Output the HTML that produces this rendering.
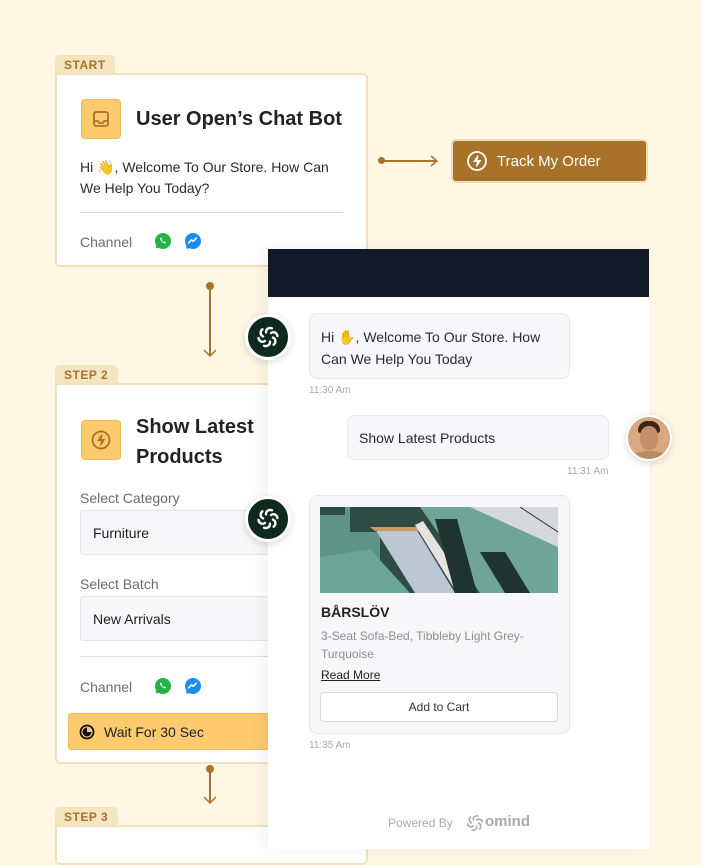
<!DOCTYPE html>
<html><head><meta charset="utf-8"><style>
*{box-sizing:border-box;margin:0;padding:0}
body{width:701px;height:845px;background:#fef7e4;font-family:"Liberation Sans","Noto Sans CJK SC",sans-serif;position:relative;overflow:hidden;color:#1f1f24}
.abs{position:absolute}
.tag{position:absolute;background:#f3e4c2;color:#a8732a;font-size:12px;font-weight:bold;letter-spacing:.5px;padding:3px 0 0 9px;height:19px;border-radius:5px 5px 0 0;white-space:nowrap}
.card{position:absolute;background:#fff;border:2px solid #f1e1bd;border-radius:0 5px 5px 5px}
.ico{position:absolute;width:40px;height:40px;background:#fdca6e;border:1px solid #f3b957;border-radius:4px;display:flex;align-items:center;justify-content:center}
.gray{color:#6b6b70;font-size:14px}
.field{position:absolute;background:#f7f7f9;border:1px solid #e6e6ea;border-radius:3px;font-size:14px;padding-left:12px;display:flex;align-items:center}
.bubble{position:absolute;background:#f7f6f9;border:1px solid #e8e7ec;border-radius:8px;font-size:14px;color:#2a2a30}
.time{position:absolute;font-size:10px;color:#a9a9ae}
.bot{position:absolute;width:46px;height:46px;border-radius:50%;background:#0f2a1c;border:3px solid #fff;box-shadow:0 2px 8px rgba(0,0,0,.15);display:flex;align-items:center;justify-content:center}
</style></head><body>

<!-- START card -->
<div class="tag" style="left:55px;top:55px;width:60px">START</div>
<div class="card" style="left:55px;top:73px;width:313px;height:194px">
  <div class="ico" style="left:24px;top:24px"><svg width="20" height="20" viewBox="0 0 20 20" fill="none" stroke="#a8732a" stroke-width="1.8"><rect x="3" y="3" width="14" height="14" rx="2"/><path d="M3 12h4l1 2h4l1-2h4"/></svg></div>
  <div class="abs" style="left:79px;top:33px;font-size:20px;font-weight:bold;color:#222">User Open’s Chat Bot</div>
  <div class="abs" style="left:23px;top:82px;font-size:14px;line-height:21px;color:#2a2a30">Hi 👋, Welcome To Our Store. How Can<br>We Help You Today?</div>
  <div class="abs" style="left:23px;top:137px;width:263px;height:1px;background:#dcdcdc"></div>
  <div class="abs gray" style="left:23px;top:159px">Channel</div>
  <svg class="abs" style="left:97px;top:157px" width="18" height="18" viewBox="0 0 18 18"><circle cx="9" cy="9" r="8" fill="#25b244"/><path d="M3 16l1-3.5" stroke="#25b244" stroke-width="3"/><path d="M6.5 5.5c-.6.6-.6 1.8.5 3.3 1.2 1.6 2.7 2.6 3.7 2.6.7 0 1.3-.6 1.3-1l-1.5-1-1 .6c-.7-.3-1.6-1.2-1.9-1.9l.6-1-1-1.5c-.3 0-.5 0-.7.2z" fill="#fff"/></svg>
  <svg class="abs" style="left:127px;top:157px" width="18" height="18" viewBox="0 0 18 18"><circle cx="9" cy="9" r="8" fill="#1a8cf5"/><path d="M3.5 16.5l.5-3" stroke="#1a8cf5" stroke-width="3"/><path d="M4.5 11l3-3.2 1.8 1.5 3-3.2-3 3.2-1.8-1.5z" fill="none" stroke="#fff" stroke-width="1.5" stroke-linejoin="round"/></svg>
</div>

<!-- connector right -->
<div class="abs" style="left:378px;top:157px;width:7px;height:7px;border-radius:50%;background:#a8732a"></div>
<div class="abs" style="left:384px;top:160px;width:52px;height:1.5px;background:#a8732a"></div>
<svg class="abs" style="left:428px;top:155px" width="11" height="12" viewBox="0 0 11 12"><path d="M3 1l6 5-6 5" fill="none" stroke="#a8732a" stroke-width="1.5"/></svg>
<div class="abs" style="left:451px;top:139px;width:197px;height:44px;border:2px solid #f0dcb2;border-radius:5px;background:#a87328;color:#fff;font-size:15px;display:flex;align-items:center;padding-left:44px">Track My Order</div>
<svg class="abs" style="left:466px;top:150px" width="22" height="22" viewBox="0 0 22 22" fill="none" stroke="#fff" stroke-width="1.8"><circle cx="11" cy="11" r="9"/><path d="M12 5.5l-4 6h3.5l-1 5 4-6H11z" fill="#fff" stroke-width="1"/></svg>

<!-- vertical connector 1 -->
<div class="abs" style="left:206px;top:282px;width:8px;height:8px;border-radius:50%;background:#a8732a"></div>
<div class="abs" style="left:209px;top:288px;width:1.5px;height:68px;background:#a8732a"></div>
<svg class="abs" style="left:203px;top:348px" width="14" height="10" viewBox="0 0 14 10"><path d="M1 2l6 6 6-6" fill="none" stroke="#a8732a" stroke-width="1.5"/></svg>

<!-- STEP 2 -->
<div class="tag" style="left:55px;top:365px;width:63px">STEP 2</div>
<div class="card" style="left:55px;top:383px;width:313px;height:381px">
  <div class="ico" style="left:24px;top:35px"><svg width="22" height="22" viewBox="0 0 22 22" fill="none" stroke="#a8732a" stroke-width="1.8"><circle cx="11" cy="11" r="8.5"/><path d="M12 5.5l-4 6h3.5l-1 5 4-6H11z" fill="#a8732a" stroke-width="1"/></svg></div>
  <div class="abs" style="left:79px;top:27px;font-size:20px;font-weight:bold;line-height:30px;color:#222">Show Latest<br>Products</div>
  <div class="abs gray" style="left:23px;top:105px">Select Category</div>
  <div class="field" style="left:23px;top:125px;width:260px;height:45px">Furniture</div>
  <div class="abs gray" style="left:23px;top:191px">Select Batch</div>
  <div class="field" style="left:23px;top:211px;width:260px;height:45px">New Arrivals</div>
  <div class="abs" style="left:23px;top:271px;width:263px;height:1px;background:#dcdcdc"></div>
  <div class="abs gray" style="left:23px;top:294px">Channel</div>
  <svg class="abs" style="left:97px;top:292px" width="18" height="18" viewBox="0 0 18 18"><circle cx="9" cy="9" r="8" fill="#25b244"/><path d="M3 16l1-3.5" stroke="#25b244" stroke-width="3"/><path d="M6.5 5.5c-.6.6-.6 1.8.5 3.3 1.2 1.6 2.7 2.6 3.7 2.6.7 0 1.3-.6 1.3-1l-1.5-1-1 .6c-.7-.3-1.6-1.2-1.9-1.9l.6-1-1-1.5c-.3 0-.5 0-.7.2z" fill="#fff"/></svg>
  <svg class="abs" style="left:127px;top:292px" width="18" height="18" viewBox="0 0 18 18"><circle cx="9" cy="9" r="8" fill="#1a8cf5"/><path d="M3.5 16.5l.5-3" stroke="#1a8cf5" stroke-width="3"/><path d="M4.5 11l3-3.2 1.8 1.5 3-3.2-3 3.2-1.8-1.5z" fill="none" stroke="#fff" stroke-width="1.5" stroke-linejoin="round"/></svg>
  <div class="abs" style="left:11px;top:328px;width:260px;height:37px;background:#fdca6e;border:1px solid #f0b95a;border-radius:3px;font-size:14px;display:flex;align-items:center;padding-left:35px">Wait For 30 Sec</div>
  <svg class="abs" style="left:22px;top:339px" width="16" height="16" viewBox="0 0 16 16"><circle cx="8" cy="8" r="6.5" fill="none" stroke="#111" stroke-width="1.8"/><path d="M8 3.5a4.5 4.5 0 1 0 4.5 4.5H8z" fill="#111"/></svg>
</div>

<!-- vertical connector 2 -->
<div class="abs" style="left:206px;top:765px;width:8px;height:8px;border-radius:50%;background:#a8732a"></div>
<div class="abs" style="left:209px;top:771px;width:1.5px;height:32px;background:#a8732a"></div>
<svg class="abs" style="left:203px;top:795px" width="14" height="10" viewBox="0 0 14 10"><path d="M1 2l6 6 6-6" fill="none" stroke="#a8732a" stroke-width="1.5"/></svg>

<div class="tag" style="left:55px;top:807px;width:63px">STEP 3</div>
<div class="card" style="left:55px;top:825px;width:313px;height:40px"></div>

<!-- chat panel -->
<div class="abs" style="left:268px;top:249px;width:381px;height:600px;background:#fff;box-shadow:-6px 0 14px rgba(0,0,0,.05)">
  <div style="height:48px;background:#111827"></div>
</div>

<div class="bot" style="left:245px;top:314px"><svg width="28" height="28" viewBox="-14 -14 28 28" fill="none" stroke="#fff" stroke-width="2.4" stroke-linecap="round"><path d="M3-4C6-6 9-4 9.5-1"/><path d="M3-4C6-6 9-4 9.5-1" transform="rotate(60)"/><path d="M3-4C6-6 9-4 9.5-1" transform="rotate(120)"/><path d="M3-4C6-6 9-4 9.5-1" transform="rotate(180)"/><path d="M3-4C6-6 9-4 9.5-1" transform="rotate(240)"/><path d="M3-4C6-6 9-4 9.5-1" transform="rotate(300)"/></svg></div>
<div class="bubble" style="left:309px;top:313px;width:261px;height:66px;padding:12px 11px;line-height:22px">Hi ✋, Welcome To Our Store. How Can We Help You Today</div>
<div class="time" style="left:309px;top:385px">11:30 Am</div>

<div class="bubble" style="left:347px;top:415px;width:262px;height:45px;padding:14px 11px">Show Latest Products</div>
<div class="time" style="left:567px;top:466px">11:31 Am</div>
<div class="abs" style="left:626px;top:415px;width:46px;height:46px;border-radius:50%;border:2px solid #fff;box-shadow:0 2px 8px rgba(0,0,0,.15);background:#d8a880;overflow:hidden">
  <div class="abs" style="left:10px;top:4px;width:22px;height:12px;border-radius:10px 10px 3px 3px;background:#3b2418"></div>
  <div class="abs" style="left:12px;top:9px;width:18px;height:24px;border-radius:45%;background:#c48e68"></div>
  <div class="abs" style="left:4px;top:34px;width:36px;height:14px;border-radius:50% 50% 0 0;background:#b98a66"></div>
</div>

<div class="bot" style="left:245px;top:496px"><svg width="28" height="28" viewBox="-14 -14 28 28" fill="none" stroke="#fff" stroke-width="2.4" stroke-linecap="round"><path d="M3-4C6-6 9-4 9.5-1"/><path d="M3-4C6-6 9-4 9.5-1" transform="rotate(60)"/><path d="M3-4C6-6 9-4 9.5-1" transform="rotate(120)"/><path d="M3-4C6-6 9-4 9.5-1" transform="rotate(180)"/><path d="M3-4C6-6 9-4 9.5-1" transform="rotate(240)"/><path d="M3-4C6-6 9-4 9.5-1" transform="rotate(300)"/></svg></div>
<div class="bubble" style="left:309px;top:495px;width:261px;height:239px">
  <svg class="abs" style="left:10px;top:11px" width="238" height="86" viewBox="0 0 238 86"><rect width="238" height="86" fill="#2f4b45"/><path d="M0 8h25V0h5v25h30v61H0z" fill="#5d9485"/><path d="M0 50l50-8 40 44H0z" fill="#6ba595"/><path d="M55 22l40-2 40 66H95z" fill="#bcc7d3"/><path d="M50 20h47l3 4H55z" fill="#c89a64"/><path d="M95 18l8-4 48 72h-14z" fill="#e6e2de"/><path d="M100 0h140v86h-80z" fill="#6ea595"/><path d="M115 12h22l20 74h-22z" fill="#1f3430"/><path d="M160 45h25l25 41h-25z" fill="#1f3430"/><path d="M150 0h88v40z" fill="#d5d9dc"/><path d="M200 0l38 25" stroke="#333" stroke-width="1"/></svg>
  <div class="abs" style="left:11px;top:108px;font-size:14px;font-weight:bold;color:#222">BÅRSLÖV</div>
  <div class="abs" style="left:11px;top:131px;font-size:12px;line-height:18px;color:#8e8e93;width:235px">3-Seat Sofa-Bed, Tibbleby Light Grey-Turquoise</div>
  <div class="abs" style="left:11px;top:172px;font-size:12px;color:#222;text-decoration:underline">Read More</div>
  <div class="abs" style="left:10px;top:196px;width:238px;height:30px;background:#fff;border:1px solid #d9d9de;border-radius:4px;font-size:12px;display:flex;align-items:center;justify-content:center;color:#333">Add to Cart</div>
</div>
<div class="time" style="left:309px;top:740px">11:35 Am</div>

<div class="abs" style="left:388px;top:816px;font-size:12px;color:#aaa">Powered By</div>
<svg class="abs" style="left:466px;top:814px" width="18" height="18" viewBox="-9 -9 18 18" fill="none" stroke="#aaa" stroke-width="1.6" stroke-linecap="round"><path d="M2-3C4-5 7-3 7.5-1"/><path d="M2-3C4-5 7-3 7.5-1" transform="rotate(60)"/><path d="M2-3C4-5 7-3 7.5-1" transform="rotate(120)"/><path d="M2-3C4-5 7-3 7.5-1" transform="rotate(180)"/><path d="M2-3C4-5 7-3 7.5-1" transform="rotate(240)"/><path d="M2-3C4-5 7-3 7.5-1" transform="rotate(300)"/></svg>
<div class="abs" style="left:485px;top:813px;font-size:15px;font-weight:bold;color:#aaa">omind</div>
</body></html>
